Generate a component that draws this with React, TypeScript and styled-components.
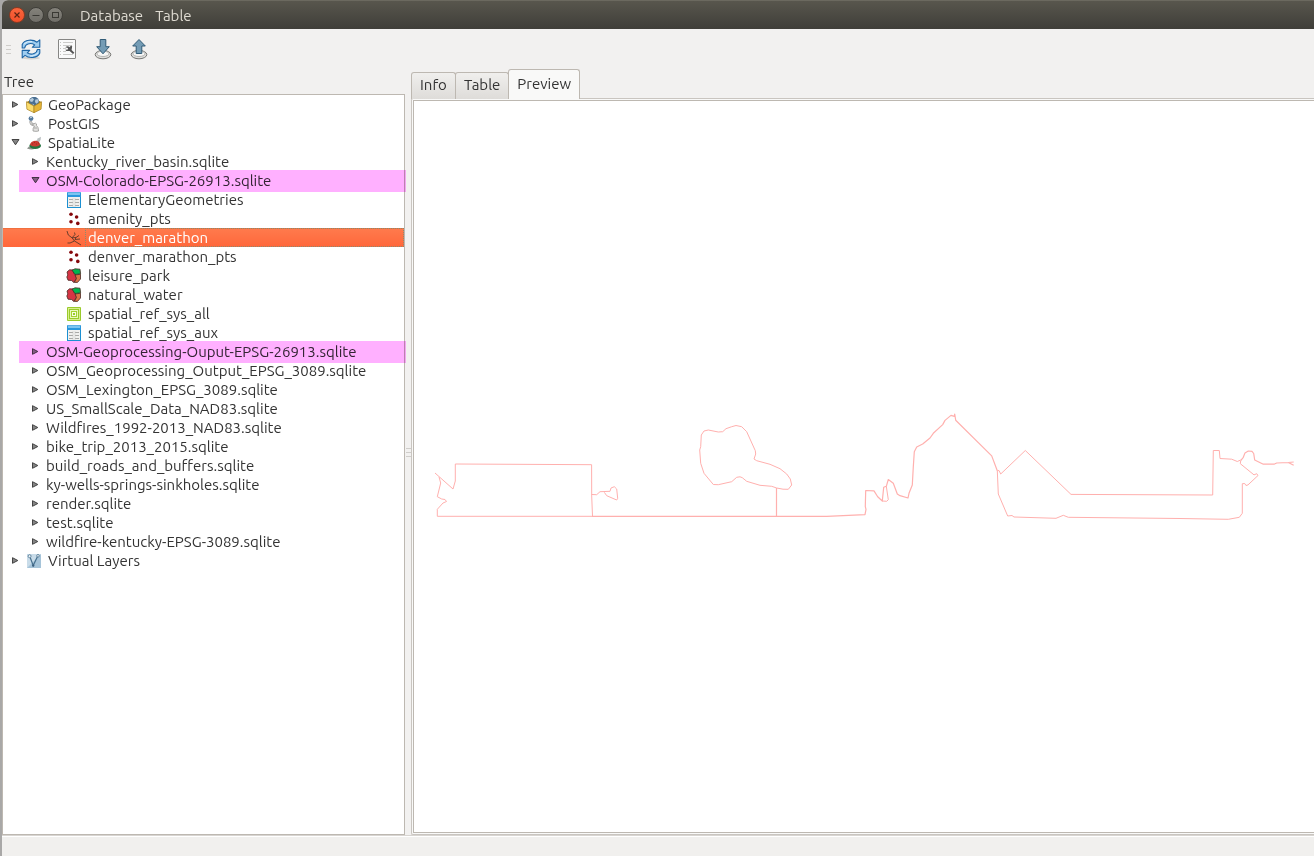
import React, { useState } from "react";
import styled, { createGlobalStyle, css } from "styled-components";

const Global = createGlobalStyle`
  *, *::before, *::after { box-sizing: border-box; }
  body {
    margin: 0;
    background: #a9a8a7;
    color: #333;
    font: 15px/19px Ubuntu, "Noto Sans", sans-serif;
  }
  button { font: inherit; color: inherit; border: 0; padding: 0; background: none; }
  ul { list-style: none; margin: 0; padding: 0; }
`;

const Window = styled.div`
  display: flex;
  flex-direction: column;
  min-height: 100vh;
  margin-left: 2px;
  background: #f2f1f0;
  border-top-left-radius: 6px;
  overflow: hidden;
`;

const TitleBar = styled.header`
  display: flex;
  align-items: center;
  height: 29px;
  padding: 0 7px;
  border-top: 1px solid #6b695f;
  background: linear-gradient(#58564d, #3f3e39);
  color: #dfdbd2;
`;

const WindowButtons = styled.div`
  display: flex;
  gap: 3px;
`;

const RoundButton = styled.button<{ $close?: boolean }>`
  display: flex;
  width: 16px;
  height: 16px;
  border-radius: 50%;
  border: 1px solid ${(p) => (p.$close ? "#8a3a22" : "#3f3e39")};
  background: ${(p) =>
    p.$close
      ? "linear-gradient(#f9663d, #f2502a)"
      : "linear-gradient(#84827b, #706e68)"};
  svg { width: 14px; height: 14px; }
`;

const Menus = styled.nav`
  display: flex;
  gap: 12px;
  margin-left: 17px;
`;

const ToolBar = styled.div`
  display: flex;
  align-items: center;
  height: 40px;
  padding-left: 4px;
`;

const Grip = styled.div`
  display: flex;
  flex-direction: column;
  gap: 3px;
  width: 5px;
  &::before, &::after, span { content: ""; height: 1px; background: #cfcdca; }
`;

const ToolButton = styled.button`
  display: flex;
  align-items: center;
  justify-content: center;
  width: 36px;
  height: 36px;
  svg { width: 22px; height: 22px; }
`;

const Tools = styled.div`
  display: flex;
  margin-left: 2px;
`;

const Main = styled.main`
  display: flex;
  flex: 1;
`;

const Dock = styled.section`
  display: flex;
  flex-direction: column;
  width: 403px;
  flex: none;
`;

const DockTitle = styled.h2`
  margin: 0;
  padding: 3px 2px;
  height: 25px;
  font: inherit;
`;

const TreeBox = styled.div`
  flex: 1;
  border: 1px solid #bdb8b1;
  background: #fff;
`;

const Row = styled.div<{ $depth: number; $selected?: boolean }>`
  position: relative;
  display: flex;
  align-items: center;
  height: 19px;
  padding-left: ${(p) => 4 + p.$depth * 20}px;
  white-space: nowrap;
  ${(p) =>
    p.$selected &&
    css`
      color: #fff;
      background: linear-gradient(#ff7b4d, #ff673b);
      box-shadow: inset 0 1px #f0703f;
    `}
`;

const Marker = styled.div`
  position: absolute;
  inset: -1px -2px -2px 16px;
  background: #ffb0ff;
  mix-blend-mode: multiply;
  pointer-events: none;
`;

const Toggle = styled.button`
  display: flex;
  width: 16px;
  height: 16px;
  margin-right: 3px;
  svg { width: 16px; height: 16px; }
`;

const ToggleSpace = styled.span`
  width: 16px;
  margin-right: 3px;
`;

const NodeIcon = styled.span`
  display: flex;
  margin-right: 3px;
  svg { width: 16px; height: 16px; }
`;

const Label = styled.span<{ $inset?: boolean; $focus?: boolean }>`
  flex: 1;
  padding-left: ${(p) => (p.$inset ? 3 : 0)}px;
  outline: ${(p) => (p.$focus ? "1px dotted #8d8a70" : "none")};
  outline-offset: -1px;
`;

const Splitter = styled.div`
  display: flex;
  align-items: center;
  justify-content: center;
  width: 6px;
  flex: none;
`;

const Detail = styled.section`
  display: flex;
  flex-direction: column;
  flex: 1;
  min-width: 0;
`;

const TabList = styled.div`
  display: flex;
  align-items: flex-end;
  height: 30px;
`;

const Tab = styled.button<{ $active?: boolean }>`
  position: relative;
  height: ${(p) => (p.$active ? 30 : 27)}px;
  padding: ${(p) => (p.$active ? "0 8px 2px" : "0 8px 3px")};
  margin-right: -1px;
  border: 1px solid #bdb8b1;
  border-bottom: 0;
  border-radius: 3px 3px 0 0;
  background: ${(p) =>
    p.$active ? "#f9f9f8" : "linear-gradient(#f0efed, #dedcd9)"};
  z-index: ${(p) => (p.$active ? 1 : 0)};
`;

const Pane = styled.div`
  display: flex;
  flex: 1;
  margin-top: -1px;
  padding: 1px 0 1px 1px;
  border: 1px solid #c9c5c0;
  border-right: 0;
  border-radius: 2px 0 0 2px;
  background: #f9f9f8;
`;

const Canvas = styled.div`
  flex: 1;
  display: flex;
  border: 1px solid #bdb8b1;
  border-right: 0;
  background: #fff;
  svg { flex: 1; width: 100%; min-width: 0; }
`;

const StatusBar = styled.footer`
  height: 21px;
  border-top: 1px solid #d8d5d1;
  background: #f1f0ee;
  box-shadow: inset 0 1px #fff;
`;

const RefreshIcon = () => (
  <svg viewBox="0 0 22 22">
    <ellipse cx="11" cy="20" rx="9" ry="1.5" fill="#d5d3cf" />
    <g fill="#9fcdf0" stroke="#1d64a5" strokeWidth="1.1" strokeLinejoin="round">
      <path d="M2.2 10 V6.5 Q3.5 3 9 2.2 Q14 1.8 17 4.2 L19.8 1.8 V9.3 H12.3 L14.7 6.9 Q11.5 4.7 8 6 Q5 7 4.7 10Z" />
      <path d="M19.8 11.5 V15 Q18.5 18.8 13 19.4 Q8 19.8 5 17.4 L2.2 19.8 V12.4 H9.7 L7.3 14.8 Q10.5 17 14 15.5 Q17 14.5 17.3 11.5Z" />
    </g>
    <path d="M4 6 Q7 3 12 3.5 M10 18 Q15 18.5 18 15" fill="none" stroke="#d9edfb" />
  </svg>
);

const SqlIcon = () => (
  <svg viewBox="0 0 22 22">
    <rect x="2.5" y="1.5" width="17" height="19" rx=".5" fill="#fafafa" stroke="#868684" />
    <path d="M7 4.5h10M7 7.5h9M7 10.5h3M7 13.5h3M7 16.5h10" stroke="#cbcbc9" />
    <path d="M4.5 4v14" stroke="#c3c3c1" strokeDasharray="1 2" />
    <path d="M9.3 9.2 Q10.4 8 12.4 8.2 L13.2 9.2 L15.3 7.6 L16.2 8.6 L15.6 12 L18.4 14.7 L17 16.1 L13.6 13 L10.4 12.9 L9.3 11.8 L11.8 11.4 L12 10Z" fill="#555" />
  </svg>
);

const ArrowIcon = ({ up = false }: { up?: boolean }) => (
  <svg viewBox="0 0 22 22">
    <ellipse cx="11" cy="16.6" rx="7.8" ry="4.2" fill="#dededc" stroke="#777774" />
    <ellipse cx="11" cy="15.8" rx="6" ry="2.7" fill="#f7f7f6" stroke="#b5b5b2" />
    <path
      d={up ? "M11 1.5 L17.3 8 H13.8 V15.5 H8.2 V8 H4.7Z" : "M8.2 1.5 H13.8 V8.7 H17.3 L11 15.8 L4.7 8.7 H8.2Z"}
      fill="#749cb5"
      stroke="#315b76"
      strokeLinejoin="round"
    />
  </svg>
);

const GeoPackageIcon = () => (
  <svg viewBox="0 0 16 16">
    <path d="M.3 5 L8 2 L15.7 5 L8 9Z" fill="#a37b18" />
    <circle cx="8" cy="4.8" r="5" fill="#4a6f92" />
    <path d="M3.8 2.4 L6.5 .8 L8 2.5 L6.2 5 L4.3 4.6Z M9.3 2.4 L12 2.2 L12.6 5 L10.3 6.8 L9 5Z M6.5 6.5 L8 7.5 L7 8.8Z" fill="#b4cadb" />
    <path d="M.3 4.8 L8 9 V15.7 L.9 12.2Z" fill="#fbdc6c" stroke="#a8811f" strokeWidth=".7" />
    <path d="M15.7 4.8 L8 9 V15.7 L15.1 12.2Z" fill="#e6b537" stroke="#a8811f" strokeWidth=".7" />
  </svg>
);

const PostGisIcon = () => (
  <svg viewBox="0 0 16 16">
    <circle cx="5" cy="2.6" r="2.4" fill="#53799c" />
    <path d="M4 1.8l2-.6" stroke="#c6d9e7" />
    <path d="M3.6 5.6 L5.4 5.2 L6.2 7.3 Q8 8 9.6 7.2 Q11 7.6 10.5 9.5 L12 11.5 L12.6 15 Q10 15.8 7 15 L7.2 12 L8.6 10.5 L4.6 8.6Z" fill="#e2e2e0" stroke="#9a9a98" strokeWidth=".8" />
    <path d="M8 12h3M5.2 7.8l3 1.4" stroke="#929290" strokeWidth=".7" />
  </svg>
);

const SpatiaLiteIcon = () => (
  <svg viewBox="0 0 16 16">
    <path d="M10 6 Q12 2.5 15 1.8 Q15.4 5 12.5 8Z" fill="#b9bfc1" />
    <path d="M1 13.5 Q6 15.6 9 13.5 L7 11 L3 11.5Z" fill="#8d938d" />
    <ellipse cx="9.2" cy="10.8" rx="5.8" ry="3.2" fill="#257440" />
    <path d="M4 10 Q4.6 6.3 9 5.8 Q13.8 5.8 14 10 Q9.5 13 4 10Z" fill="#cc3a30" />
    <path d="M6 9h1M8 7.5h1M10 9h1M12 8h1" stroke="#8f241e" strokeWidth=".7" />
  </svg>
);

const TableIcon = () => (
  <svg viewBox="0 0 16 16">
    <rect x="1.5" y="1" width="13" height="14.5" fill="#f1f1ef" stroke="#1c90d2" />
    <rect x="1" y=".5" width="14" height="4.5" fill="#2a97dd" />
    <rect x="2" y="1" width="12" height="2" fill="#7cc5f1" />
    <path d="M3 7.5h4M9 7.5h4M3 10.5h4M9 10.5h4M3 13.5h4M9 13.5h4" stroke="#a9a9a7" />
    <path d="M7 6v9M9 6v9" stroke="#c6c6c3" strokeWidth=".5" />
  </svg>
);

const PointsIcon = () => (
  <svg viewBox="0 0 16 16" fill="#85070b">
    <circle cx="5" cy="3.2" r="1.8" />
    <circle cx="10.6" cy="6" r="1.8" />
    <circle cx="5" cy="10.8" r="1.8" />
    <circle cx="11.8" cy="12.4" r="1.8" />
  </svg>
);

const LineIcon = () => (
  <svg viewBox="0 0 16 16" fill="none" stroke="#5c3a2a" strokeWidth=".9">
    <path d="M1 1 L2.3 5 L6 7.8 L8.5 11 L11 12.5 L15 15 M8.5 11 L4 13 L1.5 13 M6 7.8 L10 7.5 L13 5.5 M6 7.8 L9 4.5 L8.5 2.5 M10 7.5 L9 9.5 L14 9" />
  </svg>
);

const PolygonIcon = () => (
  <svg viewBox="0 0 16 16" stroke="#472a23" strokeWidth=".8" strokeLinejoin="round">
    <path d="M1 4 L3.5 1.8 L7 2 L8.5 6.3 L10 7 L10.5 10 L8 14.5 L5.5 12.5 L2 12.2 L.8 9 L1.8 7Z" fill="#d63545" />
    <path d="M9 7 L14.5 6.2 V11 L11.5 14.4 L8.3 14.4 L10.5 10.5Z" fill="#dc7245" />
    <path d="M6 2.2 L9 .8 L14 1.2 L14.6 5.8 L9 6.5Z" fill="#00b750" />
  </svg>
);

const LayerIcon = () => (
  <svg viewBox="0 0 16 16" fill="none">
    <rect x="1" y="1" width="14" height="14" rx="1" fill="#9acb2c" />
    <rect x="2.5" y="2.5" width="11" height="11" stroke="#d9f08e" />
    <rect x="4.5" y="4.5" width="7" height="7" fill="#a5d32f" stroke="#e9f9bb" />
    <rect x="6.5" y="6.5" width="3" height="3" fill="#9acb2c" stroke="#f6fce5" />
  </svg>
);

const VirtualIcon = () => (
  <svg viewBox="0 0 16 16" fill="none">
    <rect x="1" y="1" width="14" height="14" fill="#c9dce9" />
    <path d="M15 1v14H1Z" fill="#a6c4d9" />
    <path d="M4 4 L7.2 12.5 L11.5 3.5" stroke="#47708e" strokeWidth="1.2" />
    <circle cx="3.6" cy="3.2" r="1.5" fill="#edf4f8" stroke="#4d748f" strokeWidth=".8" />
    <circle cx="12" cy="2.8" r="1.3" fill="#edf4f8" stroke="#4d748f" strokeWidth=".8" />
    <circle cx="7.2" cy="12.6" r="1.2" fill="#3c617f" />
  </svg>
);

const icons = {
  geopackage: GeoPackageIcon,
  postgis: PostGisIcon,
  spatialite: SpatiaLiteIcon,
  table: TableIcon,
  points: PointsIcon,
  line: LineIcon,
  polygon: PolygonIcon,
  layer: LayerIcon,
  virtual: VirtualIcon,
};

type TreeNode = {
  name: string;
  icon?: keyof typeof icons;
  open?: boolean;
  marked?: boolean;
  leaf?: boolean;
  children?: TreeNode[];
};

const tree: TreeNode[] = [
  { name: "GeoPackage", icon: "geopackage" },
  { name: "PostGIS", icon: "postgis" },
  {
    name: "SpatiaLite",
    icon: "spatialite",
    open: true,
    children: [
      { name: "Kentucky_river_basin.sqlite" },
      {
        name: "OSM-Colorado-EPSG-26913.sqlite",
        open: true,
        marked: true,
        children: [
          { name: "ElementaryGeometries", icon: "table", leaf: true },
          { name: "amenity_pts", icon: "points", leaf: true },
          { name: "denver_marathon", icon: "line", leaf: true },
          { name: "denver_marathon_pts", icon: "points", leaf: true },
          { name: "leisure_park", icon: "polygon", leaf: true },
          { name: "natural_water", icon: "polygon", leaf: true },
          { name: "spatial_ref_sys_all", icon: "layer", leaf: true },
          { name: "spatial_ref_sys_aux", icon: "table", leaf: true },
        ],
      },
      { name: "OSM-Geoprocessing-Ouput-EPSG-26913.sqlite", marked: true },
      { name: "OSM_Geoprocessing_Output_EPSG_3089.sqlite" },
      { name: "OSM_Lexington_EPSG_3089.sqlite" },
      { name: "US_SmallScale_Data_NAD83.sqlite" },
      { name: "Wildfires_1992-2013_NAD83.sqlite" },
      { name: "bike_trip_2013_2015.sqlite" },
      { name: "build_roads_and_buffers.sqlite" },
      { name: "ky-wells-springs-sinkholes.sqlite" },
      { name: "render.sqlite" },
      { name: "test.sqlite" },
      { name: "wildfire-kentucky-EPSG-3089.sqlite" },
    ],
  },
  { name: "Virtual Layers", icon: "virtual" },
];

type ItemProps = {
  node: TreeNode;
  depth: number;
  selected: string;
  onSelect: (name: string) => void;
};

function TreeItem({ node, depth, selected, onSelect }: ItemProps) {
  const [open, setOpen] = useState(!!node.open);
  const Icon = node.icon && icons[node.icon];
  const isSelected = selected === node.name;
  return (
    <li role="treeitem" aria-selected={isSelected} aria-expanded={node.leaf ? undefined : open}>
      <Row $depth={depth} $selected={isSelected} onClick={() => onSelect(node.name)}>
        {node.leaf ? (
          <ToggleSpace />
        ) : (
          <Toggle aria-label={`Toggle ${node.name}`} onClick={() => setOpen(!open)}>
            <svg viewBox="0 0 16 16" fill="#858585" stroke="#444">
              <path d={open ? "M5 4.5 H12 L8.5 9.8Z" : "M5.5 4.7 L10.8 7.5 L5.5 10.3Z"} />
            </svg>
          </Toggle>
        )}
        {Icon && <NodeIcon><Icon /></NodeIcon>}
        <Label $inset={!!Icon} $focus={isSelected}>{node.name}</Label>
        {node.marked && <Marker />}
      </Row>
      {open && node.children && (
        <ul role="group">
          {node.children.map((child) => (
            <TreeItem key={child.name} node={child} depth={depth + 1} selected={selected} onSelect={onSelect} />
          ))}
        </ul>
      )}
    </li>
  );
}

const RoutePreview = () => (
  <svg viewBox="414 101 900 731" preserveAspectRatio="xMinYMid meet" fill="none" stroke="#ffb0ae" strokeLinejoin="round">
    <path d="M435 473 L453 489 L455.3 481 V464 L591.6 464.7 L591.7 496 L592.5 516 M439 477 L440.7 483 L437.3 496.7 L441.7 499 L445 499.5 L446.5 501.5 L443 503 L437.3 509.3 V516.3 H592" />
    <path d="M591.7 494.5 L596.7 494.7 L600 491.7 L610 491.3 L611 488 L614.3 486.7 L616.7 489 L617.7 498.3 L616.7 500 L606.7 495.7 L604.3 492.3" />
    <path d="M776.7 488 L783 489.2 L788.3 489.3 L791.7 485 L790.3 479 L786.7 474 L780 468.7 L770 464.3 L756.7 460.7 L754 459 L755.7 454 L755.3 450.7 L746.7 431.7 L741.7 426.7 L736 425.5 L731.7 426.7 L726 428.7 L722.7 431.7 L718.3 432 L708.3 430 L704 431 L701.3 435 L700.7 446.7 L699.7 450 L700.7 463.3 L704 473.3 L713.3 484.5 L718.3 484.7 L731.7 481.7 L736.7 477.3 L740 476.8 L742.3 477.7 L746.7 481.3 L760 485.3 L771.7 486.3Z" />
    <path strokeWidth="1.2" d="M776.5 488 V516 M592 516.4 L826.7 516.3 L865 514.7 L866 509.3 L865.3 506.7 L865.7 490.5 L874 490.9 L877.7 496.7 L882.3 501 L883.7 487.3 L886.3 486.3 L888.3 479.5 L893.3 483.3 L897.3 494 L900 495.7 L908 498 L909 493.3 L912.3 485 L913.3 466.7 L914.3 451.7 L916.7 447 L922.7 444 L930 438 L933.3 433.3 L942.7 424.6 L945 420.4 L951 415.4 L954.3 416.4 L954.7 414 L955.7 420.2 L991.7 455.9 L997.3 470.7" />
    <path d="M882.3 501 L886.7 501.3 L888.3 499.7 L886.3 486.3" />
    <path d="M997.3 470.7 L998.3 494 L1007.7 516 L1012 515.5 L1014 517 L1056 518.3 L1063.3 515.3 L1068.3 517.3 L1180 518.5 L1228.3 519.3 L1239.3 517.3 L1242.3 513.3 V483.7 L1244.7 483.5 L1246 485.5 L1248 484.9 L1258 475.5 L1256.7 473.7 L1254 474.9 L1240.3 463.7 L1240.7 460.7" />
    <path strokeWidth="1.2" d="M1240.7 460.7 L1243.3 457.3 L1245 452.9 L1248.3 451 L1252 451.3 L1253.7 453.5 L1254.7 460 L1263.3 464.2 H1274 L1276.7 463 L1288.3 462.5 L1293.7 465.3 M1288.3 462.5 L1293.7 462" />
    <path d="M997.3 470.7 L999 470.5 L1000.7 474 L1025.3 450.5 L1071 494.4 L1212.7 495 L1213.3 450.5 H1219.3 L1220 458.5 L1231.7 459.2 L1237.3 461.5 L1240.7 460" />
  </svg>
);

export default function App() {
  const [selected, setSelected] = useState("denver_marathon");
  const [tab, setTab] = useState("Preview");
  return (
    <>
      <Global />
      <Window>
        <TitleBar>
          <WindowButtons>
            <RoundButton $close aria-label="Close">
              <svg viewBox="0 0 14 14" stroke="#5c2413" strokeWidth="1.2"><path d="M4.5 4.5l5 5M9.5 4.5l-5 5" /></svg>
            </RoundButton>
            <RoundButton aria-label="Minimize">
              <svg viewBox="0 0 14 14" stroke="#3a3934"><path d="M3.5 7.5h7" /></svg>
            </RoundButton>
            <RoundButton aria-label="Maximize">
              <svg viewBox="0 0 14 14" fill="none" stroke="#3a3934"><rect x="4.5" y="4.5" width="6" height="5" /></svg>
            </RoundButton>
          </WindowButtons>
          <Menus>
            <button>Database</button>
            <button>Table</button>
          </Menus>
        </TitleBar>
        <ToolBar role="toolbar">
          <Grip><span /></Grip>
          <Tools>
            <ToolButton aria-label="Refresh"><RefreshIcon /></ToolButton>
            <ToolButton aria-label="SQL window"><SqlIcon /></ToolButton>
            <ToolButton aria-label="Import layer"><ArrowIcon /></ToolButton>
            <ToolButton aria-label="Export to file"><ArrowIcon up /></ToolButton>
          </Tools>
        </ToolBar>
        <Main>
          <Dock>
            <DockTitle>Tree</DockTitle>
            <TreeBox>
              <ul role="tree" aria-label="Tree">
                {tree.map((node) => (
                  <TreeItem key={node.name} node={node} depth={0} selected={selected} onSelect={setSelected} />
                ))}
              </ul>
            </TreeBox>
          </Dock>
          <Splitter><Grip><span /></Grip></Splitter>
          <Detail>
            <TabList role="tablist">
              {["Info", "Table", "Preview"].map((name) => (
                <Tab key={name} role="tab" aria-selected={tab === name} $active={tab === name} onClick={() => setTab(name)}>
                  {name}
                </Tab>
              ))}
            </TabList>
            <Pane role="tabpanel">
              <Canvas>{tab === "Preview" && <RoutePreview />}</Canvas>
            </Pane>
          </Detail>
        </Main>
        <StatusBar />
      </Window>
    </>
  );
}
